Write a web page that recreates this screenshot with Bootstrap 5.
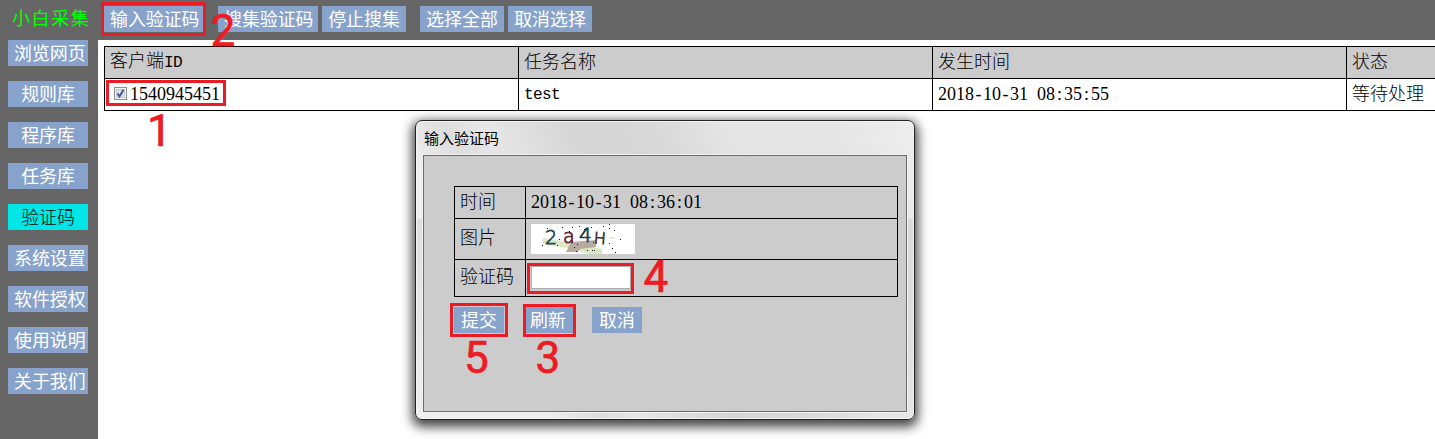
<!DOCTYPE html>
<html lang="zh-CN">
<head>
<meta charset="utf-8">
<title>小白采集</title>
<link href="https://cdn.jsdelivr.net/npm/bootstrap@5.3.0/dist/css/bootstrap.min.css" rel="stylesheet">
<style>
body{height:439px;overflow:hidden;font:300 18px/26px "Liberation Mono","Noto Sans CJK SC",sans-serif;color:#000;background:#fff}
.topbar{height:40px;background:#666;padding-top:6px}
.brand-name{width:104px;padding-left:12px;height:26px;line-height:23px;color:#0f0;font-size:18px;font-weight:400;letter-spacing:1.6px;font-family:"Noto Sans CJK SC",sans-serif}
.tool{--bs-btn-padding-x:6px;--bs-btn-padding-y:0;--bs-btn-border-width:0;--bs-btn-border-radius:0;--bs-btn-font-size:17.9px;--bs-btn-font-weight:400;--bs-btn-line-height:24px;--bs-btn-color:#fff;--bs-btn-bg:#87a3cb;--bs-btn-hover-bg:#7592bd;--bs-btn-hover-color:#fff;font-family:"Noto Sans CJK SC",sans-serif;height:26px;padding-bottom:2px;white-space:nowrap}
.w5{width:100px}.w4{width:84px}
.gap-a{margin-left:14px}
.side{width:98px;background:#666;padding-left:8px;gap:15px;height:399px}
.side .tool{width:80px}
.side .tool.current{background:#00e5e5;color:#000;font-weight:300}
.ann-grid{border-collapse:collapse;table-layout:fixed}
.ann-grid td{border:1px solid #000;padding:0 5px;height:32px;line-height:28px;white-space:nowrap;vertical-align:middle}
.records{width:1657px;margin:6px 0 0 6px}
.records thead td{background:#ccc}
.latin{font-size:16px;letter-spacing:-.6px;font-weight:400}
.num{font:400 18px/20px "Liberation Serif",serif;word-spacing:4.5px}
.num .dash{letter-spacing:3px;position:relative;left:1.5px}
.num .colon{letter-spacing:4px;position:relative;left:2px}
.tick{width:13px;height:13px;margin:0 3px 0 4px;vertical-align:0;display:inline-block}
.window{left:415px;top:120px;width:500px;height:300px;border:1px solid #222;border-radius:7px;padding:0 7px 7px;
 background:linear-gradient(180deg,transparent 0 97px,rgba(190,190,190,.35) 98px,transparent 100%),linear-gradient(62deg,#efefef 0 20%,#dedede 28%,#e6e6e6 34%,#d5d5d5 48%,#d9d9d9 60%,#e6e6e6 72%,#e4e4e4 84%,#eee 100%);
 box-shadow:inset 0 0 0 1px #f4f4f4,0 4px 11px 3px rgba(0,0,0,.72)}
.window-title{height:34px;padding:4px 0 0 1px;font:15px/26px "Noto Sans CJK SC",sans-serif}
.window-body{height:257px;border:1px solid #6c6c6c;outline:1px solid #f2f2f2;background:#ccc;padding:30px 0 0 30px}
.form-grid{width:444px}
.form-grid .pic td{height:41px}.form-grid .code td{height:37px}
.code-input{width:100px;height:23px;border:1px solid #abadb3;border-radius:0;padding:0;margin-top:-1px}
.actions{gap:19px;padding-top:10px}
.actions .tool{width:50px}
.notes{left:0;top:0;pointer-events:none}
</style>
</head>
<body class="position-relative">
<header class="topbar d-flex">
 <div class="brand-name">小白采集</div>
 <button class="btn tool w5">输入验证码</button>
 <button class="btn tool w5 gap-a">搜集验证码</button>
 <button class="btn tool w4 ms-1">停止搜集</button>
 <button class="btn tool w4 gap-a">选择全部</button>
 <button class="btn tool w4 ms-1">取消选择</button>
</header>
<div class="d-flex">
 <nav class="side d-flex flex-column flex-shrink-0">
  <button class="btn tool">浏览网页</button><button class="btn tool">规则库</button><button class="btn tool">程序库</button><button class="btn tool">任务库</button><button class="btn tool current">验证码</button><button class="btn tool">系统设置</button><button class="btn tool">软件授权</button><button class="btn tool">使用说明</button><button class="btn tool">关于我们</button>
 </nav>
 <main class="flex-grow-1 overflow-hidden">
  <table class="ann-grid records">
   <colgroup><col style="width:414px"><col style="width:414px"><col style="width:414px"><col style="width:415px"></colgroup>
   <thead><tr><td>客户端<span class="latin">ID</span></td><td>任务名称</td><td>发生时间</td><td>状态</td></tr></thead>
   <tbody><tr><td><svg class="tick" viewBox="0 0 13 13"><rect x=".5" y=".5" width="12" height="12" fill="#f4f4f4" stroke="#8e8f8f"/><rect x="2.5" y="2.5" width="8" height="8" fill="#dde2e8" stroke="#c5cad0"/><path d="M3.500 6.500 5.500 9.500 9.500 2.800" fill="none" stroke="#3d5596" stroke-width="2"/></svg><span class="num">1540945451</span></td><td><span class="latin">test</span></td><td><span class="num">2018<span class="dash">-</span>10<span class="dash">-</span>31 08<span class="colon">:</span>35<span class="colon">:</span>55</span></td><td>等待处理</td></tr></tbody>
  </table>
 </main>
</div>
<section class="window position-absolute">
 <div class="window-title">输入验证码</div>
 <div class="window-body">
  <table class="ann-grid form-grid">
   <colgroup><col style="width:71px"><col></colgroup>
   <tr><td>时间</td><td><span class="num">2018<span class="dash">-</span>10<span class="dash">-</span>31 08<span class="colon">:</span>36<span class="colon">:</span>01</span></td></tr>
   <tr class="pic"><td>图片</td><td><svg class="d-block" width="104" height="30" viewBox="0 0 104 30"><rect width="104" height="30" fill="#fff"/>
    <path d="M12 14 22 16 40 19 71 25V30H58L37 24 12 20ZM75 14 83 13 83 15Z" fill="#d9e8c2"/><path d="M40 18 65 16V23L49 25 47 28H35Z" fill="#b9aaa0"/>
    <g font-family="DejaVu Sans" font-size="19" stroke-width=".8"><text x="14" y="20" fill="#234b50" stroke="#234b50">2</text><text x="32" y="19" fill="#602a30" stroke="#602a30">a</text><text x="48" y="18" font-size="20" fill="#173e4a" stroke="#173e4a">4</text><text x="63" y="20" font-size="16" fill="#3d3940" stroke="#3d3940" transform="rotate(4 69 14)">H</text></g>
    <path d="M16 4.500h1M31 3.500h1M41 3.500h1M48 2.500h1M53 5.500h1M60 3.500h1M72 2.500h1M78 .5h1M78 4.500h1M83 6.500h1M28 15.500h1M11 21.500h1M26 21.500h1M43 23.500h1M45 27.500h1M56 26.500h1M61 26.500h1M63 26.500h1M78 19.500h1M81 24.500h1M84 28.500h1M89 15.500h1M62 18.500h1M38 7.500h1M46 20.500h1" stroke="#111"/></svg></td></tr>
   <tr class="code"><td>验证码</td><td><input class="form-control code-input" aria-label="验证码"></td></tr>
  </table>
  <div class="actions d-flex"><button class="btn tool">提交</button><button class="btn tool">刷新</button><button class="btn tool">取消</button></div>
 </div>
</section>
<svg class="notes position-absolute" width="1435" height="439">
 <g fill="none" stroke="#ed1c24" stroke-width="3"><path d="M102.500 3.500H204.500V34.500H102.500ZM107.500 81.500H224.500V104.500H107.500ZM528.500 264.500H632.500V292.500H528.500ZM451.500 304.500H506.500V335.500H451.500ZM524.500 305.500H574.500V335.500H524.500Z"/></g>
 <g fill="#ed1c24" stroke="#ed1c24" stroke-width=".7" font-family="Roboto" font-weight="400" font-size="44"><text x="147" y="146">1</text><text x="210.500" y="46">2</text><text x="535.500" y="373">3</text><text x="643.500" y="292">4</text><text x="464" y="373">5</text></g>
</svg>
<script src="https://cdn.jsdelivr.net/npm/bootstrap@5.3.0/dist/js/bootstrap.bundle.min.js"></script>
</body>
</html>
